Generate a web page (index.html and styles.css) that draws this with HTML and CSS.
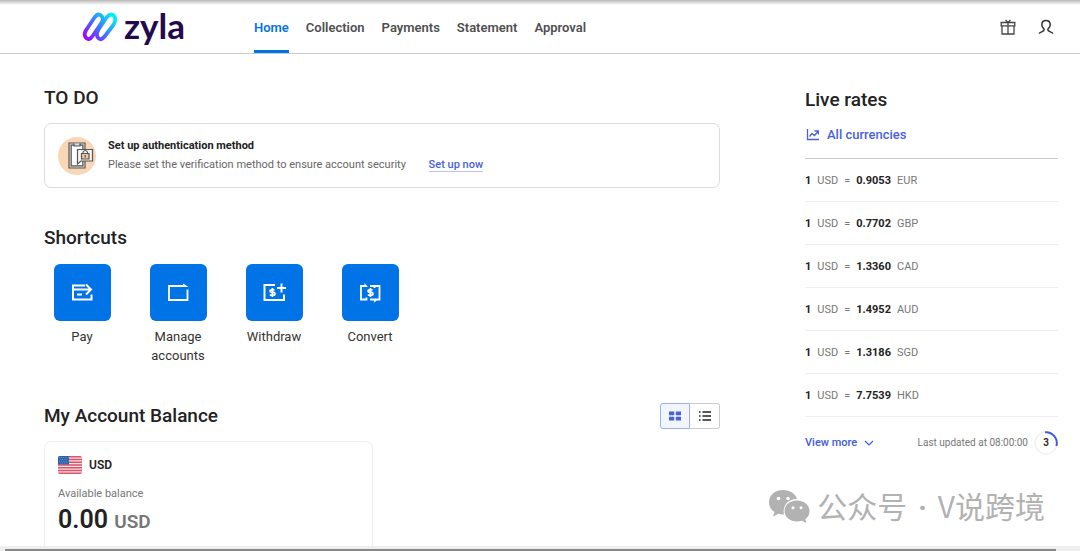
FILE: index.html
```html
<!DOCTYPE html>
<html lang="en">
<head>
<meta charset="utf-8">
<meta name="viewport" content="width=device-width, initial-scale=1">
<title>Zyla</title>
<link rel="stylesheet" href="styles.css">
</head>
<body>
<header class="topbar">
  <a class="brand" href="#">
    <svg class="brand-mark" viewBox="0 0 36 32" fill="none" aria-hidden="true">
      <defs>
        <linearGradient id="mark" x1="5" y1="29" x2="31" y2="5" gradientUnits="userSpaceOnUse">
          <stop offset="0" stop-color="#a300ff"/>
          <stop offset=".5" stop-color="#3b78ff"/>
          <stop offset="1" stop-color="#00f0f0"/>
        </linearGradient>
      </defs>
      <g stroke="url(#mark)" stroke-width="3.8" stroke-linejoin="round">
        <path d="M12.500 6.500Q16.500 1 20 5.500Q22 9 19 12.500L11 24.500Q6.500 31 3.500 26Q1.500 22.500 4.500 18.500Z"/>
        <path d="M24.500 6.500Q29.500 1 32.500 5.500Q34.500 10 31 14.500L23 25Q18.500 31 15.500 26Q14 22.500 16.500 18.500Z"/>
      </g>
    </svg>
    <span class="brand-name">zyla</span>
  </a>
  <nav class="nav" aria-label="Main">
    <a class="nav-link nav-link-active" href="#" aria-current="page">Home</a>
    <a class="nav-link" href="#">Collection</a>
    <a class="nav-link" href="#">Payments</a>
    <a class="nav-link" href="#">Statement</a>
    <a class="nav-link" href="#">Approval</a>
  </nav>
  <div class="tools">
    <button class="icon-button" type="button" aria-label="Rewards">
      <svg viewBox="0 0 18 18" fill="none" stroke="#444" stroke-width="1.3"><path d="M2.200 4.500H15.800V7.800H2.200ZM3 7.800V16H15V7.800M9 4.500V16M6.500 2 9 4.500 11.500 2"/></svg>
    </button>
    <button class="icon-button" type="button" aria-label="Profile">
      <svg viewBox="0 0 18 18" fill="none" stroke="#333" stroke-width="1.5"><path d="M2 15.500C3 13.700 7.200 13.800 7.200 11.800C7.200 10.500 4.800 9.800 4.800 6.800C4.800 4 6.500 2.500 9 2.500S13.200 4 13.200 6.800C13.200 9.800 10.800 10.500 10.800 11.800C10.800 13.800 15 13.700 16 15.500"/></svg>
    </button>
  </div>
</header>

<main class="page">
  <div class="primary">
    <section class="todo">
      <h2 class="heading">TO DO</h2>
      <div class="todo-card">
        <svg class="todo-icon" viewBox="0 0 38 38" fill="none" aria-hidden="true">
          <circle cx="19" cy="19" r="19" fill="#f9d6b6"/>
          <g stroke="#555" stroke-width="1.2">
            <path d="M11 6H27V31H11Z" fill="#ddd"/>
            <path d="M13.200 8.200H24.800V28.800H13.200Z" fill="#fff"/>
            <path d="M16 6.500V9H22V6.500" fill="#ddd"/>
            <path d="M19.500 12.500H34.500V24H23L19.500 27Z" fill="#f5f5f5"/>
            <path d="M23.500 16.500H31V22H23.500Z" fill="#f2c49d"/>
            <path d="M25 16.500V15Q27.200 12 29.500 15V16.500M27.200 18V20.500"/>
          </g>
        </svg>
        <div>
          <h3 class="todo-title">Set up authentication method</h3>
          <p class="todo-text">Please set the verification method to ensure account security <a class="todo-link" href="#">Set up now</a></p>
        </div>
      </div>
    </section>

    <section class="shortcuts">
      <h2 class="heading">Shortcuts</h2>
      <div class="shortcut-list">
        <button class="shortcut" type="button">
          <span class="tile"><svg viewBox="0 0 24 20" fill="none" stroke="#fff" stroke-width="2"><path d="M15 2.500H3V16.500H21.500V11.500M3 6.500H20M16 1.500 21 6.500 16 11.500M7 11.500H12"/></svg></span>
          <span class="shortcut-label">Pay</span>
        </button>
        <button class="shortcut" type="button">
          <span class="tile"><svg viewBox="0 0 24 20" fill="none" stroke="#fff" stroke-width="1.800"><path d="M20 3H3V17H21.500V6.500"/><path d="M17 .500 22.500 4H17Z" fill="#fff" stroke="none"/></svg></span>
          <span class="shortcut-label">Manage accounts</span>
        </button>
        <button class="shortcut" type="button">
          <span class="tile"><svg viewBox="0 0 24 20" fill="none" stroke="#fff" stroke-width="2"><path d="M13 2H2.500V17H22V11.500M15 5H24M19.500 .500V9.500"/><path d="M12.500 6.800H9.500Q8 6.800 8 8T9.500 9.400H11.300Q13 9.400 13 10.800T11.300 12.200H7.800M10.400 5V14" stroke-width="1.700"/></svg></span>
          <span class="shortcut-label">Withdraw</span>
        </button>
        <button class="shortcut" type="button">
          <span class="tile"><svg viewBox="0 0 24 20" fill="none" stroke="#fff" stroke-width="1.800"><path d="M8 3H3V16.500H8.500V14.500M12 16.500H21.500V3H12M16.500 3V5"/><path d="M6.500 0 10 4H6.500ZM15 16H20L16.500 19.500Z" fill="#fff" stroke="none"/><path d="M14.500 6.800H11.500Q10 6.800 10 8T11.500 9.400H13.300Q15 9.400 15 10.800T13.300 12.200H9.800M12.400 5V14" stroke-width="1.700"/></svg></span>
          <span class="shortcut-label">Convert</span>
        </button>
      </div>
    </section>

    <section class="balance">
      <div class="balance-head">
        <h2 class="heading">My Account Balance</h2>
        <div class="view-toggle">
          <button class="toggle toggle-active" type="button" aria-label="Grid view" aria-pressed="true">
            <svg viewBox="0 0 14 12" fill="#4a5fdc"><path d="M1 1.500H6.200V5.300H1ZM7.800 1.500H13V5.300H7.800ZM1 6.700H6.200V10.500H1ZM7.800 6.700H13V10.500H7.800Z"/></svg>
          </button>
          <button class="toggle" type="button" aria-label="List view" aria-pressed="false">
            <svg viewBox="0 0 14 12" stroke="#222" stroke-width="1.600"><path d="M1 2H2.600M4.500 2H13M1 6H2.600M4.500 6H13M1 10H2.600M4.500 10H13"/></svg>
          </button>
        </div>
      </div>
      <article class="account">
        <div class="account-name">
          <svg class="flag" viewBox="0 0 24 18" aria-hidden="true">
            <defs><clipPath id="flag"><rect width="24" height="18" rx="2"/></clipPath></defs>
            <g clip-path="url(#flag)">
              <path fill="#f7dfe3" d="M0 0H24V18H0Z"/>
              <path stroke="#d9566a" stroke-width="1.400" d="M0 .700H24M0 3.460H24M0 6.230H24M0 9H24M0 11.770H24M0 14.540H24M0 17.300H24"/>
              <path fill="#2862a8" d="M0 0H11V8.500H0Z"/>
              <path stroke="#8fb3d9" stroke-width=".800" stroke-dasharray=".8 1.400" d="M1 1.500H10.500M2 3.300H10.500M1 5.100H10.500M2 6.900H10.500"/>
            </g>
          </svg>
          <h3 class="account-code">USD</h3>
        </div>
        <p class="account-caption">Available balance</p>
        <p class="account-amount">0.00 <span class="account-unit">USD</span></p>
      </article>
    </section>
  </div>

  <aside class="rates">
    <h2 class="heading">Live rates</h2>
    <a class="all-currencies" href="#">
      <svg viewBox="0 0 14 14" fill="none" stroke="#4a5fdc" stroke-width="1.300" aria-hidden="true"><path d="M1.500 1V11.500H13M3.500 8.500 6 5.500 8.500 7.500 12 3.500M8.500 3H12.300V6.500"/></svg>
      All currencies
    </a>
    <table class="rate-table">
      <tbody>
        <tr><th scope="row">1</th><td>USD</td><td>=</td><td class="rate">0.9053</td><td>EUR</td></tr>
        <tr><th scope="row">1</th><td>USD</td><td>=</td><td class="rate">0.7702</td><td>GBP</td></tr>
        <tr><th scope="row">1</th><td>USD</td><td>=</td><td class="rate">1.3360</td><td>CAD</td></tr>
        <tr><th scope="row">1</th><td>USD</td><td>=</td><td class="rate">1.4952</td><td>AUD</td></tr>
        <tr><th scope="row">1</th><td>USD</td><td>=</td><td class="rate">1.3186</td><td>SGD</td></tr>
        <tr><th scope="row">1</th><td>USD</td><td>=</td><td class="rate">7.7539</td><td>HKD</td></tr>
      </tbody>
    </table>
    <div class="rates-foot">
      <button class="view-more" type="button">View more
        <svg viewBox="0 0 10 6" fill="none" stroke="#3f5bdc" stroke-width="1.200" aria-hidden="true"><path d="M1 1 5 5 9 1"/></svg>
      </button>
      <span class="updated">Last updated at 08:00:00</span>
      <span class="countdown">
        <svg class="countdown-ring" viewBox="0 0 24 24" fill="none" aria-hidden="true">
          <circle cx="12" cy="12" r="11" stroke="#f1f1f1" stroke-width="1.500"/>
          <path d="M11 1.200A10.900 10.900 0 0 1 22.400 15" stroke="#3f5bdc" stroke-width="2"/>
        </svg>
        <span class="countdown-value">3</span>
      </span>
    </div>
  </aside>
</main>

<div class="watermark">
  <svg viewBox="0 0 42 36" aria-hidden="true">
    <path fill="#b2b2b2" d="M15 1C6.500 1 1 6.500 1 13.500C1 17.500 3 20.800 6.500 23L5 27.500 10.500 24.800Q13 25.700 16 25.500C14 17 20 10 29 10C27.500 4.500 22 1 15 1Z"/>
    <path fill="#b2b2b2" d="M29 11.500C21.500 11.500 16.500 16 16.500 22C16.500 28 22 32.500 29 32.500Q31.500 32.500 34 31.700L38.500 34 37.300 30.200C40 28.200 41.500 25.500 41.500 22C41.500 16 36 11.500 29 11.500Z"/>
    <g fill="#fff"><circle cx="10.500" cy="9.500" r="1.800"/><circle cx="20" cy="9.500" r="1.800"/><circle cx="25" cy="18.800" r="1.500"/><circle cx="33" cy="18.800" r="1.500"/></g>
  </svg>
  <span lang="zh">公众号 <span class="watermark-dot">·</span> V说跨境</span>
</div>
<div class="scroll-track"><div class="scroll-thumb"></div></div>
</body>
</html>
```

FILE: styles.css
```css
* {
  box-sizing: border-box;
}

body {
  margin: 0;
  height: 100vh;
  overflow: hidden;
  background: #fff;
  color: #222;
  font: 400 11px/20px Roboto, "Liberation Sans", sans-serif;
}

h2, h3, p {
  margin: 0;
}

a {
  text-decoration: none;
}

button {
  padding: 0;
  border: 0;
  background: none;
  color: inherit;
  font: inherit;
  cursor: pointer;
}

svg {
  display: block;
}

.topbar {
  display: flex;
  height: 54px;
  padding: 0 25px 0 82px;
  border-bottom: 1px solid #ccc;
  background: linear-gradient(#b8b8b8, #fff 5px);
}

.brand {
  display: flex;
  align-items: center;
  gap: 6px;
  width: 172px;
}

.brand-mark {
  width: 36px;
  height: 32px;
}

.brand-name {
  padding-bottom: 3px;
  color: #230a4e;
  font: 700 35px/40px Lato, sans-serif;
}

.nav {
  display: flex;
  flex: 1;
  gap: 17px;
}

.nav-link {
  padding-top: 18px;
  border-bottom: 3px solid transparent;
  color: #505050;
  font-size: 13px;
  font-weight: 600;
}

.nav-link-active {
  border-color: #0073e6;
  color: #0073e6;
}

.tools {
  display: flex;
  align-items: center;
  gap: 20px;
}

.icon-button svg {
  width: 18px;
  height: 18px;
}

.page {
  display: grid;
  grid-template-columns: minmax(0, 1fr) 253px;
  gap: 85px;
  padding: 32px 22px 0 44px;
}

.heading {
  font-size: 19px;
  font-weight: 500;
  line-height: 24px;
}

.todo-card {
  display: flex;
  align-items: center;
  gap: 12px;
  margin-top: 13px;
  padding: 12px 13px;
  border: 1px solid #ddd;
  border-radius: 7px;
}

.todo-icon {
  width: 38px;
  height: 38px;
}

.todo-title {
  font-size: 11px;
  font-weight: 700;
  line-height: 19px;
}

.todo-text {
  color: #666;
}

.todo-link {
  margin-left: 20px;
  border-bottom: 1px solid #b9c5fa;
  color: #4a5fdc;
  font-weight: 500;
}

.shortcuts {
  margin-top: 38px;
}

.shortcut-list {
  display: flex;
  gap: 16px;
  margin: 14px 0 0 -2px;
}

.shortcut {
  display: flex;
  flex-direction: column;
  align-items: center;
  gap: 6px;
  width: 80px;
}

.tile {
  display: grid;
  place-items: center;
  width: 57px;
  height: 57px;
  border-radius: 6px;
  background: #0073e6;
}

.tile svg {
  width: 24px;
  height: 20px;
}

.shortcut-label {
  color: #333;
  font-size: 13px;
  line-height: 19px;
}

.balance {
  margin-top: 38px;
}

.balance-head {
  display: flex;
  align-items: center;
  justify-content: space-between;
}

.view-toggle {
  display: flex;
}

.toggle {
  display: grid;
  place-items: center;
  width: 30px;
  height: 26px;
  border: 1px solid #ccc;
  border-left: 0;
  border-radius: 0 3px 3px 0;
}

.toggle-active {
  border: 1px solid #9db0ec;
  border-radius: 3px 0 0 3px;
  background: #f0f5ff;
}

.toggle svg {
  width: 14px;
  height: 12px;
}

.account {
  width: 329px;
  height: 160px;
  margin-top: 12px;
  padding: 13px;
  border: 1px solid #eee;
  border-radius: 7px;
}

.account-name {
  display: flex;
  align-items: center;
  gap: 7px;
}

.flag {
  width: 24px;
  height: 18px;
}

.account-code {
  font-size: 12px;
  font-weight: 600;
}

.account-caption {
  margin-top: 10px;
  color: #777;
  line-height: 18px;
}

.account-amount {
  font-size: 25px;
  font-weight: 600;
  line-height: 34px;
}

.account-unit {
  color: #777;
  font-size: 19px;
}

.rates {
  padding-top: 2px;
}

.all-currencies {
  display: flex;
  align-items: center;
  gap: 7px;
  margin-top: 13px;
  padding: 0 1px 13px;
  color: #4a5fdc;
  font-size: 13px;
  font-weight: 500;
}

.all-currencies svg {
  width: 14px;
  height: 14px;
}

.rate-table {
  width: 100%;
  border-collapse: collapse;
  color: #777;
}

.rate-table tr {
  height: 43px;
  border-bottom: 1px solid #eee;
}

.rate-table tr:first-child {
  border-top: 1px solid #ccc;
}

.rate-table td,
.rate-table th {
  padding: 2px 6px 0 0;
  text-align: left;
  font-size: 11px;
  white-space: nowrap;
}

.rate-table th,
.rate-table .rate {
  color: #222;
  font-weight: 700;
}

.rate-table td:last-child {
  width: 100%;
}

.rates-foot {
  display: flex;
  align-items: center;
  margin-top: 14px;
}

.view-more {
  display: flex;
  align-items: center;
  gap: 7px;
  color: #3f5bdc;
  font-weight: 500;
}

.view-more svg {
  width: 10px;
  height: 6px;
}

.updated {
  margin-left: auto;
  color: #777;
  font-size: 10px;
}

.countdown {
  display: grid;
  place-items: center;
  width: 24px;
  height: 24px;
  margin-left: 6px;
}

.countdown-ring,
.countdown-value {
  grid-area: 1 / 1;
}

.countdown-value {
  font-size: 10px;
  font-weight: 600;
}

.watermark {
  position: absolute;
  right: 35px;
  bottom: 23px;
  display: flex;
  align-items: center;
  gap: 7px;
  color: #b2b2b2;
  font: 400 30px/40px "Noto Sans CJK SC", sans-serif;
}

.watermark svg {
  width: 42px;
  height: 36px;
}

.watermark-dot {
  margin: 0 4px;
  font-family: Roboto, sans-serif;
  font-weight: 700;
}

.scroll-track {
  position: fixed;
  right: 0;
  bottom: 0;
  left: 0;
  padding: 3px 24px 0 5px;
  background: #eee;
}

.scroll-thumb {
  height: 2px;
  background: #888;
}
```
